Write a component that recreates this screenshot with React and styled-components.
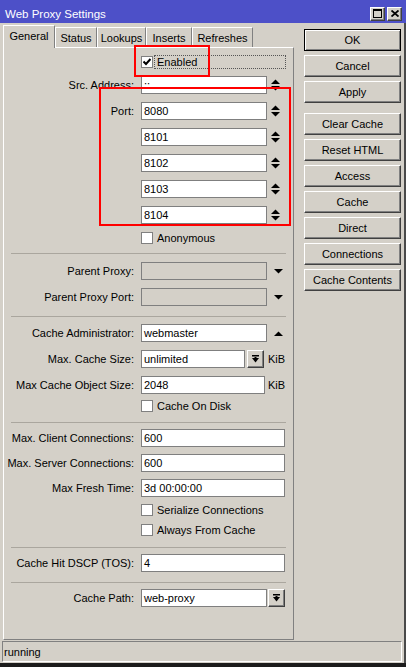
import React from 'react'
import styled, { createGlobalStyle } from 'styled-components'

const GlobalStyle = createGlobalStyle`
  html, body {
    margin: 0;
    padding: 0;
    background: #d4d0c8;
  }
  body {
    font-family: "Liberation Sans", Arial, sans-serif;
    font-size: 11px;
    color: #000;
  }
  * {
    box-sizing: border-box;
  }
`

const Window = styled.div`
  width: 406px;
  height: 667px;
  display: flex;
  flex-direction: column;
  background: #d4d0c8;
  overflow: hidden;
`
const TitleBar = styled.div`
  height: 23px;
  flex-shrink: 0;
  background: #4d50c8;
  color: #fff;
  display: flex;
  align-items: center;
  padding: 4px 4px 0 5px;
`
const Title = styled.div`
  flex: 1;
  font-size: 11.5px;
`
const TitleButtons = styled.div`
  display: flex;
  gap: 2px;
`
const TitleButton = styled.div`
  width: 15px;
  height: 14px;
  background: #d4d0c8;
  border: 1px solid;
  border-color: #fff #404040 #404040 #fff;
  box-shadow: inset -1px -1px 0 #808080;
  display: flex;
  align-items: center;
  justify-content: center;
`
const Frame = styled.div`
  flex: 1;
  display: flex;
  flex-direction: column;
  border-right: 2px solid #4a4a4a;
`
const Body = styled.div`
  flex: 1;
  display: flex;
`
const Main = styled.div`
  width: 291px;
  margin-left: 3px;
  padding-bottom: 1px;
  display: flex;
  flex-direction: column;
`
const Tabs = styled.div`
  height: 24px;
  display: flex;
  align-items: flex-end;
  position: relative;
  z-index: 2;
`
const Tab = styled.div`
  width: ${(p) => p.$w}px;
  height: ${(p) => (p.$active ? 23 : 20)}px;
  margin-bottom: ${(p) => (p.$active ? -1 : 0)}px;
  background: #d4d0c8;
  border-top: 1px solid #fff;
  border-left: 1px solid #fff;
  border-right: 1px solid #808080;
  display: flex;
  align-items: center;
  justify-content: center;
  padding-bottom: ${(p) => (p.$active ? 3 : 0)}px;
  white-space: nowrap;
`
const Panel = styled.div`
  flex: 1;
  position: relative;
  border: 1px solid;
  border-color: #fff #808080 #808080 #fff;
  display: flex;
  flex-direction: column;
`
const Side = styled.div`
  width: 97px;
  margin-left: 10px;
  padding-top: 6px;
  display: flex;
  flex-direction: column;
`
const Button = styled.div`
  height: 22px;
  margin-top: ${(p) => p.$mt}px;
  display: flex;
  align-items: center;
  justify-content: center;
  background: #d4d0c8;
  border: 1px solid;
  border-color: ${(p) => (p.$default ? '#000' : '#fff #404040 #404040 #fff')};
  box-shadow: ${(p) =>
    p.$default ? 'inset 1px 1px 0 #fff, inset -1px -1px 0 #808080' : 'inset -1px -1px 0 #808080'};
  white-space: nowrap;
`
const Row = styled.div`
  display: flex;
  align-items: center;
  height: ${(p) => p.$h || 18}px;
  margin-top: ${(p) => p.$mt}px;
  flex-shrink: 0;
`
const Label = styled.div`
  width: 130px;
  margin-right: 7px;
  text-align: right;
  white-space: nowrap;
  flex-shrink: 0;
`
const Input = styled.div`
  width: ${(p) => p.$w}px;
  height: 18px;
  background: ${(p) => (p.$disabled ? '#d4d0c8' : '#fff')};
  border: 1px solid #7f7f7f;
  padding: 0 2px;
  display: flex;
  align-items: center;
  white-space: nowrap;
  overflow: hidden;
  flex-shrink: 0;
`
const IconBox = styled.div`
  margin-left: ${(p) => p.$ml}px;
  display: flex;
  align-items: center;
`
const DropButton = styled.div`
  width: 17px;
  height: 18px;
  margin-left: ${(p) => p.$ml}px;
  background: #d4d0c8;
  border: 1px solid;
  border-color: #fff #404040 #404040 #fff;
  box-shadow: inset -1px -1px 0 #808080;
  display: flex;
  align-items: center;
  justify-content: center;
  flex-shrink: 0;
`
const Unit = styled.div`
  margin-left: ${(p) => p.$ml}px;
`
const Box = styled.div`
  width: 12px;
  height: 12px;
  background: #fff;
  border: 1px solid #808080;
  display: flex;
  align-items: center;
  justify-content: center;
  flex-shrink: 0;
`
const CheckText = styled.div`
  height: 14px;
  margin-left: 1px;
  padding: 0 2px;
  border: 1px ${(p) => (p.$focus ? 'dotted #555' : 'solid transparent')};
  display: flex;
  align-items: center;
  white-space: nowrap;
  ${(p) => p.$focus && 'flex: 1; margin-right: 7px;'}
`
const Sep = styled.div`
  height: 1px;
  margin: ${(p) => p.$mt}px 7px 0 7px;
  background: #aaa69e;
  flex-shrink: 0;
`
const Highlight = styled.div`
  position: relative;
  flex-shrink: 0;
  margin-top: ${(p) => p.$mt || 0}px;
  &::after {
    content: '';
    position: absolute;
    z-index: 5;
    left: ${(p) => p.$l}px;
    top: ${(p) => p.$t}px;
    width: ${(p) => p.$w}px;
    height: ${(p) => p.$h}px;
    border: 2px solid #f00;
    pointer-events: none;
  }
`
const StatusBar = styled.div`
  height: 21px;
  margin-left: 2px;
  width: 400px;
  border: 1px solid;
  border-color: #808080 #fff #fff #808080;
  display: flex;
  align-items: center;
  padding-left: 1px;
`
const StatusGap = styled.div`
  height: 1px;
`
const Taskbar = styled.div`
  height: 4px;
  background: #1c1c1c;
  flex-shrink: 0;
`

const SpinIcon = () => (
  <svg width="9" height="12" viewBox="0 0 9 12">
    <polygon points="0,5 4.5,0.5 9,5" fill="#000" />
    <polygon points="0,7 9,7 4.5,11.5" fill="#000" />
  </svg>
)
const DownIcon = () => (
  <svg width="9" height="5" viewBox="0 0 9 5">
    <polygon points="0,0 9,0 4.5,4.5" fill="#000" />
  </svg>
)
const UpIcon = () => (
  <svg width="9" height="5" viewBox="0 0 9 5">
    <polygon points="0,5 4.5,0.5 9,5" fill="#000" />
  </svg>
)
const DropIcon = () => (
  <svg width="7" height="8" viewBox="0 0 7 8">
    <rect x="0" y="0" width="7" height="1.5" fill="#000" />
    <polygon points="0,3 7,3 3.5,7.5" fill="#000" />
    <rect x="2.5" y="2" width="2" height="2" fill="#000" />
  </svg>
)
const CheckMark = () => (
  <svg width="8" height="8" viewBox="0 0 8 8">
    <polyline points="0.5,3.5 3,6 7.5,1" fill="none" stroke="#000" strokeWidth="2" />
  </svg>
)

const Field = ({ label, value, w = 126, icon, disabled, mt = 8 }) => (
  <Row $mt={mt}>
    <Label>{label}</Label>
    <Input $w={w} $disabled={disabled}>{value}</Input>
    {icon === 'spin' && (
      <IconBox $ml={4}>
        <SpinIcon />
      </IconBox>
    )}
    {icon === 'down' && (
      <IconBox $ml={7}>
        <DownIcon />
      </IconBox>
    )}
    {icon === 'up' && (
      <IconBox $ml={7}>
        <UpIcon />
      </IconBox>
    )}
  </Row>
)

const Check = ({ label, checked, focus, mt }) => (
  <Row $h={14} $mt={mt}>
    <Label />
    <Box>{checked && <CheckMark />}</Box>
    <CheckText $focus={focus}>{label}</CheckText>
  </Row>
)

const tabs = [
  { name: 'General', w: 52 },
  { name: 'Status', w: 42 },
  { name: 'Lookups', w: 49 },
  { name: 'Inserts', w: 46 },
  { name: 'Refreshes', w: 61 },
]

const buttons = [
  { name: 'OK', def: true, mt: 0 },
  { name: 'Cancel', mt: 4 },
  { name: 'Apply', mt: 4 },
  { name: 'Clear Cache', mt: 10 },
  { name: 'Reset HTML', mt: 4 },
  { name: 'Access', mt: 4 },
  { name: 'Cache', mt: 4 },
  { name: 'Direct', mt: 4 },
  { name: 'Connections', mt: 4 },
  { name: 'Cache Contents', mt: 4 },
]

const ports = ['8080', '8101', '8102', '8103', '8104']

export default function App() {
  return (
    <Window>
      <GlobalStyle />
      <TitleBar>
        <Title>Web Proxy Settings</Title>
        <TitleButtons>
          <TitleButton>
            <svg width="9" height="9" viewBox="0 0 9 9">
              <rect x="0.5" y="0.5" width="8" height="8" fill="none" stroke="#000" />
              <rect x="0" y="0" width="9" height="2" fill="#000" />
            </svg>
          </TitleButton>
          <TitleButton>
            <svg width="8" height="7" viewBox="0 0 8 7">
              <path d="M0.5 0.5 L7.5 6.5 M7.5 0.5 L0.5 6.5" stroke="#000" strokeWidth="1.8" />
            </svg>
          </TitleButton>
        </TitleButtons>
      </TitleBar>
      <Frame>
        <Body>
          <Main>
            <Tabs>
              {tabs.map((t, i) => (
                <Tab key={t.name} $w={t.w} $active={i === 0}>
                  {t.name}
                </Tab>
              ))}
            </Tabs>
            <Panel>
              <Highlight $l={130} $t={-10} $w={72} $h={28} $mt={7}>
                <Check label="Enabled" checked focus mt={0} />
              </Highlight>
              <Field label="Src. Address:" value="::" icon="spin" mt={7} />
              <Highlight $l={95} $t={-7} $w={188} $h={135}>
                {ports.map((p, i) => (
                  <Field key={p} label={i === 0 ? 'Port:' : ''} value={p} icon="spin" mt={8} />
                ))}
              </Highlight>
              <Check label="Anonymous" mt={7} />
              <Sep $mt={8} />
              <Field label="Parent Proxy:" value="" icon="down" disabled mt={8} />
              <Field label="Parent Proxy Port:" value="" icon="down" disabled mt={8} />
              <Sep $mt={10} />
              <Field label="Cache Administrator:" value="webmaster" icon="up" mt={7} />
              <Row $mt={8}>
                <Label>Max. Cache Size:</Label>
                <Input $w={104}>unlimited</Input>
                <DropButton $ml={2}>
                  <DropIcon />
                </DropButton>
                <Unit $ml={4}>KiB</Unit>
              </Row>
              <Row $mt={8}>
                <Label>Max Cache Object Size:</Label>
                <Input $w={124}>2048</Input>
                <Unit $ml={3}>KiB</Unit>
              </Row>
              <Check label="Cache On Disk" mt={5} />
              <Sep $mt={9} />
              <Field label="Max. Client Connections:" value="600" w={144} mt={6} />
              <Field label="Max. Server Connections:" value="600" w={144} mt={7} />
              <Field label="Max Fresh Time:" value="3d 00:00:00" w={144} mt={7} />
              <Check label="Serialize Connections" mt={6} />
              <Check label="Always From Cache" mt={6} />
              <Sep $mt={10} />
              <Field label="Cache Hit DSCP (TOS):" value="4" w={144} mt={6} />
              <Sep $mt={10} />
              <Row $mt={6}>
                <Label>Cache Path:</Label>
                <Input $w={126}>web-proxy</Input>
                <DropButton $ml={1}>
                  <DropIcon />
                </DropButton>
              </Row>
            </Panel>
          </Main>
          <Side>
            {buttons.map((b) => (
              <Button key={b.name} $default={b.def} $mt={b.mt}>
                {b.name}
              </Button>
            ))}
          </Side>
        </Body>
        <StatusBar>running</StatusBar>
        <StatusGap />
      </Frame>
      <Taskbar />
    </Window>
  )
}
